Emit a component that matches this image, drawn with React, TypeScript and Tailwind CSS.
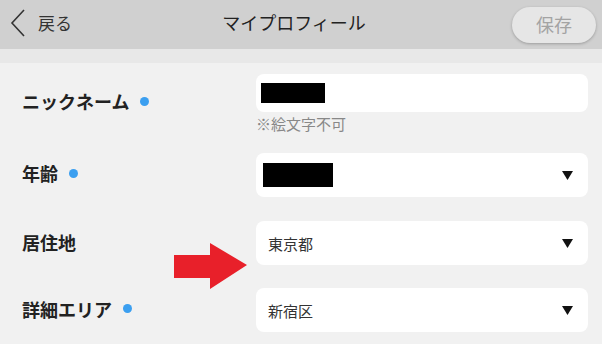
import React from "react";

const font = { fontFamily: '"Noto Sans CJK JP", "Noto Sans", sans-serif' };

function Dot() {
  return <span className="inline-block w-[9px] h-[9px] rounded-full bg-[#3b9ff0] ml-[11px]" />;
}

function Caret() {
  return (
    <svg width="11" height="9" viewBox="0 0 11 9" className="mr-[15px]">
      <path d="M0 0 L11 0 L5.5 9 Z" fill="#111" />
    </svg>
  );
}

export default function App() {
  return (
    <div className="relative w-[602px] h-[344px] overflow-hidden bg-[#f1f1f1]" style={font}>
      {/* Header */}
      <div className="h-[49px] bg-[#d0d0d0] flex items-center justify-between pl-[10px] pr-[6px] relative">
        <div className="flex items-center mt-[-3px]">
          <svg width="16" height="28" viewBox="0 0 16 28">
            <path d="M14 1 L2 14 L14 27" fill="none" stroke="#333" strokeWidth="1.6" />
          </svg>
          <span className="ml-[12px] text-[17px] leading-none text-[#333] mt-[-2px]">戻る</span>
        </div>
        <div className="absolute left-0 right-0 top-0 h-[44px] flex items-center justify-center pointer-events-none">
          <span className="text-[18px] leading-none text-[#222] ml-[-14px]">マイプロフィール</span>
        </div>
        <div className="w-[84px] h-[36px] rounded-full bg-[#e6e6e6] shadow-[0_1px_3px_rgba(0,0,0,0.25)] flex items-center justify-center mt-[1px]">
          <span className="text-[18px] leading-none text-[#a3a3a3] mt-[-3px]">保存</span>
        </div>
      </div>
      <div className="h-[14px] bg-[#e8e8e8]" />

      {/* Body */}
      <div className="pr-[14px]">
        {/* Nickname */}
        <div className="flex pt-[11px]">
          <div className="w-[256px] pl-[22px] flex items-center h-[54px]">
            <span className="text-[18px] font-bold text-[#222] leading-none">ニックネーム</span>
            <Dot />
          </div>
          <div className="flex-1">
            <div className="h-[38px] bg-white rounded-[8px] flex items-center pl-[5px]">
              <div className="w-[64px] h-[20px] bg-black" />
            </div>
            <div className="mt-[4px] text-[15px] leading-[16px] text-[#888]">※絵文字不可</div>
          </div>
        </div>

        {/* Age */}
        <div className="flex mt-[21px] h-[44px] items-center">
          <div className="w-[256px] pl-[22px] flex items-center mt-[-4px]">
            <span className="text-[18px] font-bold text-[#222] leading-none">年齢</span>
            <Dot />
          </div>
          <div className="flex-1 h-[44px] bg-white rounded-[8px] flex items-center justify-between pl-[7px]">
            <div className="w-[70px] h-[24px] bg-black" />
            <Caret />
          </div>
        </div>

        {/* Residence */}
        <div className="flex mt-[24px] h-[44px] items-center">
          <div className="w-[256px] pl-[22px] flex items-center mt-[-3px]">
            <span className="text-[18px] font-bold text-[#222] leading-none">居住地</span>
          </div>
          <div className="flex-1 h-[44px] bg-white rounded-[8px] flex items-center justify-between pl-[12px]">
            <span className="text-[15px] text-[#333] leading-none">東京都</span>
            <Caret />
          </div>
        </div>

        {/* Area */}
        <div className="flex mt-[23px] h-[44px] items-center">
          <div className="w-[256px] pl-[22px] flex items-center mt-[-3px]">
            <span className="text-[18px] font-bold text-[#222] leading-none">詳細エリア</span>
            <Dot />
          </div>
          <div className="flex-1 h-[44px] bg-white rounded-[8px] flex items-center justify-between pl-[12px]">
            <span className="text-[15px] text-[#333] leading-none">新宿区</span>
            <Caret />
          </div>
        </div>
      </div>

      {/* Red arrow overlay */}
      <svg className="absolute left-[174px] top-[243px]" width="74" height="48" viewBox="0 0 74 48">
        <path d="M0 12 L36 12 L36 0 L73 22 L36 46 L36 35 L0 35 Z" fill="#e8202a" />
      </svg>
    </div>
  );
}
